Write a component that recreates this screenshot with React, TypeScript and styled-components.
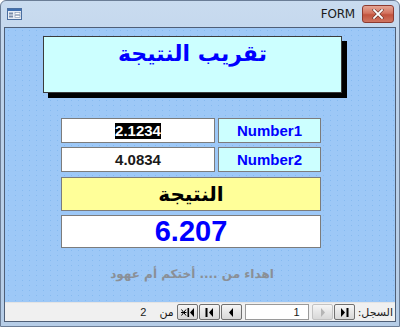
import React from "react";
import styled, { createGlobalStyle } from "styled-components";

const GlobalStyle = createGlobalStyle`
  html, body {
    margin: 0;
    padding: 0;
    background: #ffffff;
  }
  body {
    font-family: "Liberation Sans", "DejaVu Sans", Arial, sans-serif;
  }
`;

const Window = styled.div`
  width: 400px;
  height: 327px;
  box-sizing: border-box;
  display: flex;
  flex-direction: column;
  padding: 0 3px 4px 3px;
  border: 1px solid #6b7d96;
  border-radius: 6px 6px 0 0;
  background: linear-gradient(180deg, #c9dbef 0%, #bcd2ea 30%, #b6cde7 100%);
`;

const TitleBar = styled.div`
  height: 26px;
  display: flex;
  align-items: center;
  padding: 0 2px 0 3px;
  gap: 4px;
`;

const TitleText = styled.div`
  margin-left: auto;
  font-family: "DejaVu Sans", "Liberation Sans", sans-serif;
  font-size: 12px;
  color: #1a1a1a;
  letter-spacing: -0.2px;
`;

const CloseButton = styled.div`
  width: 30px;
  height: 16px;
  margin-left: 3px;
  border: 1px solid #8c3a30;
  border-radius: 3px;
  background: linear-gradient(180deg, #e4a594 0%, #d4735f 45%, #c1533e 55%, #cf7460 100%);
  display: flex;
  align-items: center;
  justify-content: center;
`;

const Client = styled.div`
  flex: 1;
  display: flex;
  flex-direction: column;
  border: 1px solid #4f5f77;
`;

const Canvas = styled.div`
  flex: 1;
  display: flex;
  flex-direction: column;
  background-color: #9dc8f7;
  background-image: radial-gradient(circle, #86baf0 0.6px, transparent 0.9px);
  background-size: 7px 5px;
  padding-top: 8px;
`;

const TitleBox = styled.div`
  width: 299px;
  height: 57px;
  box-sizing: border-box;
  margin-left: 38px;
  border: 1px solid #3b3b3b;
  background: #ccffff;
  box-shadow: 5px 5px 0 #000000;
  display: flex;
  justify-content: center;
  align-items: flex-start;
  padding-top: 4px;
  direction: rtl;
`;

const TitleLabel = styled.span`
  font-family: "DejaVu Sans", "Liberation Sans", sans-serif;
  font-weight: bold;
  font-size: 22px;
  color: #0000ff;
`;

const Fields = styled.div`
  width: 260px;
  margin: 25px 0 0 56px;
  display: grid;
  grid-template-columns: 154px 103px;
  column-gap: 3px;
`;

const Cell = styled.div<{ $bg: string; $h: number; $wide?: boolean; $mt?: number }>`
  grid-column: ${(p) => (p.$wide ? "1 / 3" : "auto")};
  height: ${(p) => p.$h}px;
  margin-top: ${(p) => p.$mt ?? 0}px;
  box-sizing: border-box;
  border: 1px solid #7c7c7c;
  background: ${(p) => p.$bg};
  display: flex;
  align-items: center;
  justify-content: center;
`;

const ValueText = styled.span<{ $selected?: boolean }>`
  font-weight: bold;
  font-size: 15px;
  color: ${(p) => (p.$selected ? "#ffffff" : "#1a1a1a")};
  background: ${(p) => (p.$selected ? "#000000" : "transparent")};
  line-height: 16px;
`;

const LabelText = styled.span`
  font-weight: bold;
  font-size: 15px;
  color: #0000ff;
`;

const ResultLabel = styled.span`
  font-family: "DejaVu Sans", "Liberation Sans", sans-serif;
  font-weight: bold;
  font-size: 20px;
  color: #000000;
  direction: rtl;
`;

const ResultValue = styled.span`
  font-weight: bold;
  font-size: 29px;
  color: #0000ff;
`;

const Dedication = styled.div`
  margin-top: 19px;
  margin-left: -16px;
  text-align: center;
  direction: rtl;
  font-family: "DejaVu Sans", "Liberation Sans", sans-serif;
  font-weight: bold;
  font-size: 12px;
  color: #8a8f96;
`;

const NavBar = styled.div`
  height: 18px;
  background: #f0f0f0;
  border-top: 1px solid #e4e4e4;
  display: flex;
  direction: rtl;
  align-items: center;
  padding-right: 2px;
  gap: 1px;
  font-family: "DejaVu Sans", "Liberation Sans", sans-serif;
  font-size: 11px;
  color: #1a1a1a;
`;

const NavCaption = styled.span`
  margin-left: 2px;
  font-size: 11px;
`;

const NavButton = styled.div<{ $disabled?: boolean }>`
  width: 21px;
  height: 16px;
  box-sizing: border-box;
  border: 1px solid ${(p) => (p.$disabled ? "#c2c2c2" : "#707070")};
  border-radius: 2px;
  background: linear-gradient(180deg, #f6f6f6 0%, #e6e6e6 50%, #d8d8d8 100%);
  display: flex;
  align-items: center;
  justify-content: center;
`;

const RecordBox = styled.div`
  width: 64px;
  height: 16px;
  box-sizing: border-box;
  margin: 0 2px;
  border: 1px solid #9a9a9a;
  background: #ffffff;
  display: flex;
  align-items: center;
  direction: ltr;
  justify-content: flex-end;
  padding-right: 8px;
  font-family: "Liberation Sans", sans-serif;
  font-size: 11px;
`;

const OfText = styled.span`
  margin-right: 2px;
`;

const CountText = styled.span`
  margin-right: 12px;
  font-family: "Liberation Sans", sans-serif;
  font-size: 11px;
`;

const FormIcon = () => (
  <svg width="15" height="12" viewBox="0 0 15 12">
    <rect x="0.5" y="0.5" width="14" height="11" fill="#e8eef6" stroke="#4a6ea0" />
    <rect x="1" y="1" width="13" height="2" fill="#3f6fb0" />
    <rect x="2" y="4.5" width="4" height="2" fill="#7a8ca8" />
    <rect x="8" y="4.5" width="5" height="2" fill="#ffffff" stroke="#7a8ca8" strokeWidth="0.6" />
    <rect x="2" y="7.5" width="4" height="2" fill="#7a8ca8" />
    <rect x="8" y="7.5" width="5" height="2" fill="#ffffff" stroke="#7a8ca8" strokeWidth="0.6" />
  </svg>
);

const CloseIcon = () => (
  <svg width="12" height="10" viewBox="0 0 12 10">
    <path d="M2 1 L10 9 M10 1 L2 9" stroke="#5a2a22" strokeWidth="3" strokeLinecap="square" />
    <path d="M2 1 L10 9 M10 1 L2 9" stroke="#ffffff" strokeWidth="1.8" strokeLinecap="square" />
  </svg>
);

type NavIconKind = "last" | "next" | "prev" | "first" | "new";

const NavIcon = ({ kind, color = "#000" }: { kind: NavIconKind; color?: string }) => (
  <svg width="13" height="9" viewBox="0 0 13 9">
    {kind === "last" && (
      <>
        <path d="M3 0 L7 4.5 L3 9 Z" fill={color} />
        <rect x="8.5" y="0" width="2" height="9" fill={color} />
      </>
    )}
    {kind === "next" && <path d="M5 0 L9 4.5 L5 9 Z" fill={color} />}
    {kind === "prev" && <path d="M8 0 L4 4.5 L8 9 Z" fill={color} />}
    {kind === "first" && (
      <>
        <rect x="2.5" y="0" width="2" height="9" fill={color} />
        <path d="M10 0 L6 4.5 L10 9 Z" fill={color} />
      </>
    )}
    {kind === "new" && (
      <>
        <path d="M0.5 1.5 L5 7.5 M5 1.5 L0.5 7.5 M0 4.5 L5.5 4.5" stroke={color} strokeWidth="1" />
        <rect x="6.5" y="0" width="1.6" height="9" fill={color} />
        <path d="M13 0 L9 4.5 L13 9 Z" fill={color} />
      </>
    )}
  </svg>
);

const App: React.FC = () => {
  return (
    <>
      <GlobalStyle />
      <Window>
        <TitleBar>
          <FormIcon />
          <TitleText>FORM</TitleText>
          <CloseButton>
            <CloseIcon />
          </CloseButton>
        </TitleBar>
        <Client>
          <Canvas>
            <TitleBox>
              <TitleLabel>تقريب النتيجة</TitleLabel>
            </TitleBox>
            <Fields>
              <Cell $bg="#ffffff" $h={25}>
                <ValueText $selected>2.1234</ValueText>
              </Cell>
              <Cell $bg="#ccffff" $h={25}>
                <LabelText>Number1</LabelText>
              </Cell>
              <Cell $bg="#ffffff" $h={25} $mt={4}>
                <ValueText>4.0834</ValueText>
              </Cell>
              <Cell $bg="#ccffff" $h={25} $mt={4}>
                <LabelText>Number2</LabelText>
              </Cell>
              <Cell $bg="#ffff99" $h={34} $mt={5} $wide>
                <ResultLabel>النتيجة</ResultLabel>
              </Cell>
              <Cell $bg="#ffffff" $h={33} $mt={4} $wide>
                <ResultValue>6.207</ResultValue>
              </Cell>
            </Fields>
            <Dedication>اهداء من .... أختكم أم عهود</Dedication>
          </Canvas>
          <NavBar>
            <NavCaption>السجل:</NavCaption>
            <NavButton>
              <NavIcon kind="last" />
            </NavButton>
            <NavButton $disabled>
              <NavIcon kind="next" color="#b5b5b5" />
            </NavButton>
            <RecordBox>1</RecordBox>
            <NavButton>
              <NavIcon kind="prev" />
            </NavButton>
            <NavButton>
              <NavIcon kind="first" />
            </NavButton>
            <NavButton>
              <NavIcon kind="new" />
            </NavButton>
            <OfText>من</OfText>
            <CountText>2</CountText>
          </NavBar>
        </Client>
      </Window>
    </>
  );
};

export default App;
